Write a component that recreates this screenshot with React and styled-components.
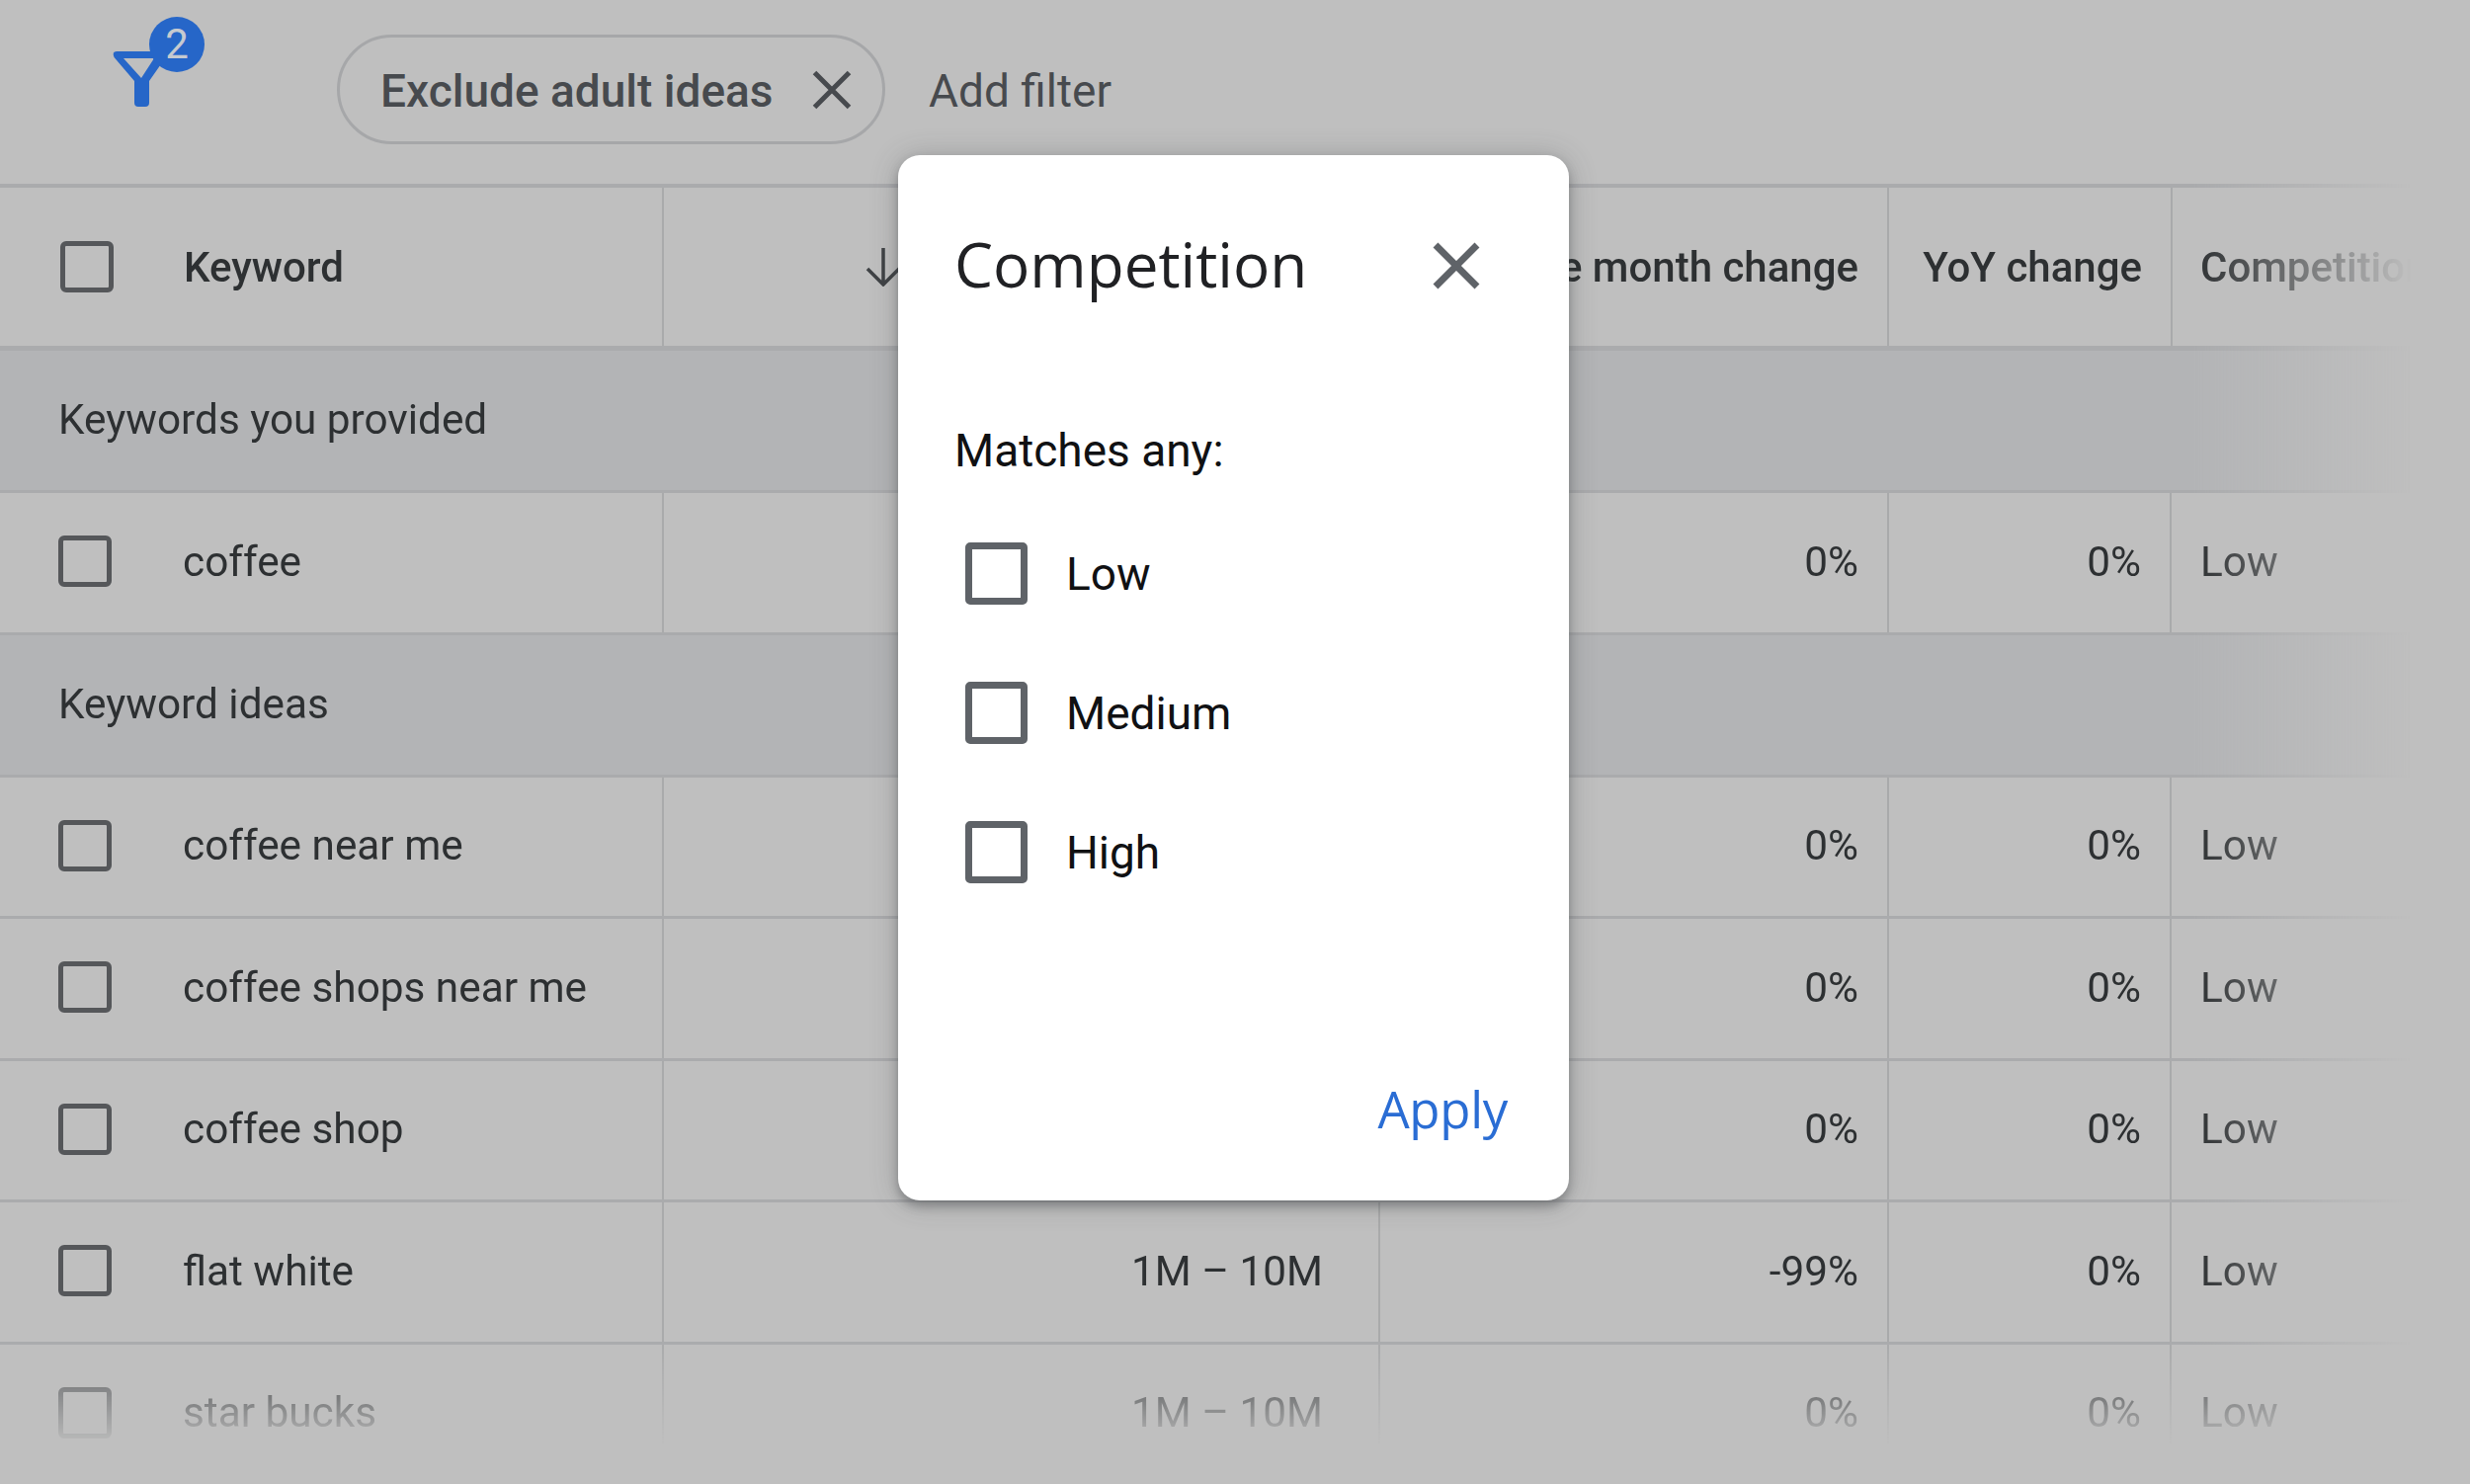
import { createGlobalStyle } from 'styled-components';
import styled from 'styled-components';

const COLORS = {
  page: '#bfbfbf',
  band: '#b3b4b6',
  line: '#aaabad',
  thinLine: '#a9aaab',
  text: '#2d3032',
  grey: '#474a4e',
  box: '#55575a',
  blue: '#2666c8',
  link: '#2a6dd4',
};

const GlobalStyle = createGlobalStyle`
  html, body {
    margin: 0;
    background: ${COLORS.page};
  }
  body {
    font-family: Roboto, "Liberation Sans", sans-serif;
    overflow: hidden;
  }
`;

// searches is only filled in where the dialog doesn't cover the column
const rows = [
  { type: 'band', label: 'Keywords you provided' },
  { keyword: 'coffee', three: '0%', yoy: '0%', level: 'Low' },
  { type: 'band', label: 'Keyword ideas' },
  { keyword: 'coffee near me', three: '0%', yoy: '0%', level: 'Low' },
  { keyword: 'coffee shops near me', three: '0%', yoy: '0%', level: 'Low' },
  { keyword: 'coffee shop', three: '0%', yoy: '0%', level: 'Low' },
  { keyword: 'flat white', searches: '1M – 10M', three: '-99%', yoy: '0%', level: 'Low' },
  { keyword: 'star bucks', searches: '1M – 10M', three: '0%', yoy: '0%', level: 'Low' },
];

const CloseIcon = ({ size, weight }) => (
  <svg width={size} height={size} viewBox="0 0 48 48" fill="none" stroke="currentColor" strokeWidth={weight}>
    <path d="M3 3 L45 45 M45 3 L3 45" />
  </svg>
);

const FunnelIcon = () => (
  <svg width="70" height="70" viewBox="110 45 70 70" fill={COLORS.blue}>
    <path
      fillRule="evenodd"
      d="M118 52 H172 L151 82 V104 a4 4 0 0 1 -4 4 H140 a4 4 0 0 1 -4 -4 V82 L115.500 58 Q113 52 118 52 Z M125 59 L143 79 L156 59 Z"
    />
  </svg>
);

const SortIcon = () => (
  <svg width="36" height="40" viewBox="0 0 36 40" fill="none" stroke="#3f4245" strokeWidth="3.500">
    <path d="M18 1 V37 M2 22 L18 38 L34 22" />
  </svg>
);

export default function App() {
  return (
    <Page>
      <GlobalStyle />
      <Toolbar>
        <FilterButton>
          <FunnelIcon />
          <Badge>2</Badge>
        </FilterButton>
        <Chip>
          Exclude adult ideas
          <ChipClose><CloseIcon size={40} weight={6} /></ChipClose>
        </Chip>
        <AddFilter>Add filter</AddFilter>
      </Toolbar>

      <Table>
        <HeaderRow>
          <HeaderCell>
            <Checkbox />
            <KeywordLabel>Keyword</KeywordLabel>
          </HeaderCell>
          <SortCell>
            <SortIcon />
          </SortCell>
          <HeaderCell $right>Three month change</HeaderCell>
          <HeaderCell $right>YoY change</HeaderCell>
          <HeaderCell $last>Competition</HeaderCell>
        </HeaderRow>

        {rows.map((row) =>
          row.type === 'band' ? (
            <BandRow key={row.label}>{row.label}</BandRow>
          ) : (
            <DataRow key={row.keyword}>
              <KeywordCell>
                <Checkbox />
                <KeywordLabel $plain>{row.keyword}</KeywordLabel>
              </KeywordCell>
              <ValueCell $pad={56}>{row.searches}</ValueCell>
              <ValueCell>{row.three}</ValueCell>
              <ValueCell>{row.yoy}</ValueCell>
              <LevelCell>{row.level}</LevelCell>
            </DataRow>
          )
        )}
      </Table>

      <Modal>
        <ModalHead>
          <ModalTitle>Competition</ModalTitle>
          <ModalClose><CloseIcon size={48} weight={7} /></ModalClose>
        </ModalHead>
        <Matches>Matches any:</Matches>
        <Options>
          {['Low', 'Medium', 'High'].map((option) => (
            <Option key={option}>
              <OptionBox />
              {option}
            </Option>
          ))}
        </Options>
        <Apply>Apply</Apply>
      </Modal>
    </Page>
  );
}

const Page = styled.div`
  position: relative;
  width: 2500px;
  height: 1502px;
  overflow: hidden;
  background: ${COLORS.page};
`;

const Toolbar = styled.div`
  display: flex;
  align-items: flex-start;
  height: 186px;
  padding: 35px 0 0 110px;
  box-sizing: border-box;
`;

const FilterButton = styled.div`
  position: relative;
  width: 231px;
  height: 70px;
  margin-top: 10px;
`;

const Badge = styled.span`
  position: absolute;
  left: 41px;
  top: -28px;
  width: 56px;
  height: 56px;
  border-radius: 50%;
  background: ${COLORS.blue};
  color: #c6cad0;
  font-size: 42px;
  line-height: 56px;
  text-align: center;
`;

const Chip = styled.div`
  display: flex;
  align-items: center;
  box-sizing: border-box;
  width: 555px;
  height: 111px;
  padding: 3px 0 0 41px;
  border: 3px solid #a6a7a9;
  border-radius: 56px;
  color: ${COLORS.grey};
  font-size: 46px;
  font-weight: 500;
`;

const ChipClose = styled.span`
  display: flex;
  margin: -3px 0 0 39px;
  color: ${COLORS.grey};
`;

const AddFilter = styled.div`
  margin: 2px 0 0 44px;
  line-height: 111px;
  color: ${COLORS.grey};
  font-size: 46px;
`;

const Table = styled.div`
  width: 2500px;
  height: 1316px;
  border-top: 4px solid ${COLORS.line};
  box-sizing: border-box;
  mask-image: linear-gradient(to right, #000 2220px, transparent 2440px),
    linear-gradient(to bottom, #000 1172px, transparent 1278px);
  mask-composite: intersect;
`;

const HeaderRow = styled.div`
  display: grid;
  grid-template-columns: 672px 725px 515px 287px 1fr;
  height: 165px;
  border-bottom: 5px solid ${COLORS.line};
  box-sizing: border-box;
`;

const HeaderCell = styled.div`
  display: flex;
  align-items: center;
  justify-content: ${(props) => (props.$right ? 'flex-end' : 'flex-start')};
  box-sizing: border-box;
  padding: ${(props) => (props.$right ? '0 29px 0 0' : props.$last ? '0 0 0 28px' : '0 0 0 61px')};
  border-right: ${(props) => (props.$last ? 'none' : `2px solid ${COLORS.thinLine}`)};
  color: ${COLORS.text};
  font-size: 42px;
  font-weight: 500;
  white-space: nowrap;
`;

const SortCell = styled(HeaderCell)`
  padding-left: 204px;
`;

const BandRow = styled.div`
  display: flex;
  align-items: center;
  height: 144px;
  padding: 0 0 2px 59px;
  box-sizing: border-box;
  background: ${COLORS.band};
  border-bottom: 3px solid ${COLORS.line};
  color: ${COLORS.text};
  font-size: 42.300px;
`;

const DataRow = styled.div`
  display: grid;
  grid-template-columns: 672px 725px 515px 286px 1fr;
  height: 143.500px;
  box-sizing: border-box;
  border-bottom: 3px solid ${COLORS.line};
  color: ${COLORS.text};
  font-size: 42.300px;
`;

const KeywordCell = styled.div`
  display: flex;
  align-items: center;
  padding: 0 0 2px 59px;
  border-right: 2px solid ${COLORS.thinLine};
`;

const Checkbox = styled.span`
  flex: none;
  width: 54px;
  height: 52px;
  box-sizing: border-box;
  border: 5px solid ${COLORS.box};
  border-radius: 6px;
`;

const KeywordLabel = styled.span`
  margin-left: ${(props) => (props.$plain ? 72 : 71)}px;
  font-weight: ${(props) => (props.$plain ? 400 : 500)};
`;

const ValueCell = styled.div`
  display: flex;
  align-items: center;
  justify-content: flex-end;
  padding: 0 ${(props) => props.$pad || 29}px 2px 0;
  border-right: 2px solid ${COLORS.thinLine};
`;

const LevelCell = styled.div`
  display: flex;
  align-items: center;
  padding: 0 0 2px 29px;
  color: ${COLORS.text};
`;

const Modal = styled.div`
  position: absolute;
  left: 909px;
  top: 157px;
  width: 679px;
  height: 1058px;
  box-sizing: border-box;
  padding: 0 62px 0 57px;
  border-radius: 22px;
  background: #fff;
  box-shadow: 0 6px 10px rgba(60, 64, 67, 0.35), 0 2px 28px rgba(60, 64, 67, 0.3);
`;

const ModalHead = styled.div`
  display: flex;
  align-items: center;
  justify-content: space-between;
  height: 226px;
`;

const ModalTitle = styled.div`
  margin-top: -7px;
  color: #202124;
  font-family: "Open Sans", sans-serif;
  font-size: 62px;
`;

const ModalClose = styled.span`
  display: flex;
  margin-top: -3px;
  margin-right: 28px;
  color: #5f6368;
`;

const Matches = styled.div`
  color: #101113;
  font-size: 46px;
  line-height: 146px;
`;

const Options = styled.div`
  display: flex;
  flex-direction: column;
  gap: 78px;
  padding: 20px 0 0 11px;
`;

const Option = styled.div`
  display: flex;
  align-items: center;
  gap: 39px;
  color: #101113;
  font-size: 46px;
`;

const OptionBox = styled.span`
  width: 63px;
  height: 63px;
  box-sizing: border-box;
  border: 7px solid #5f6368;
  border-radius: 5px;
`;

const Apply = styled.div`
  position: absolute;
  right: 62px;
  bottom: 58px;
  color: ${COLORS.link};
  font-family: "Open Sans", sans-serif;
  font-size: 51px;
  font-weight: 500;
  letter-spacing: -0.300px;
`;
